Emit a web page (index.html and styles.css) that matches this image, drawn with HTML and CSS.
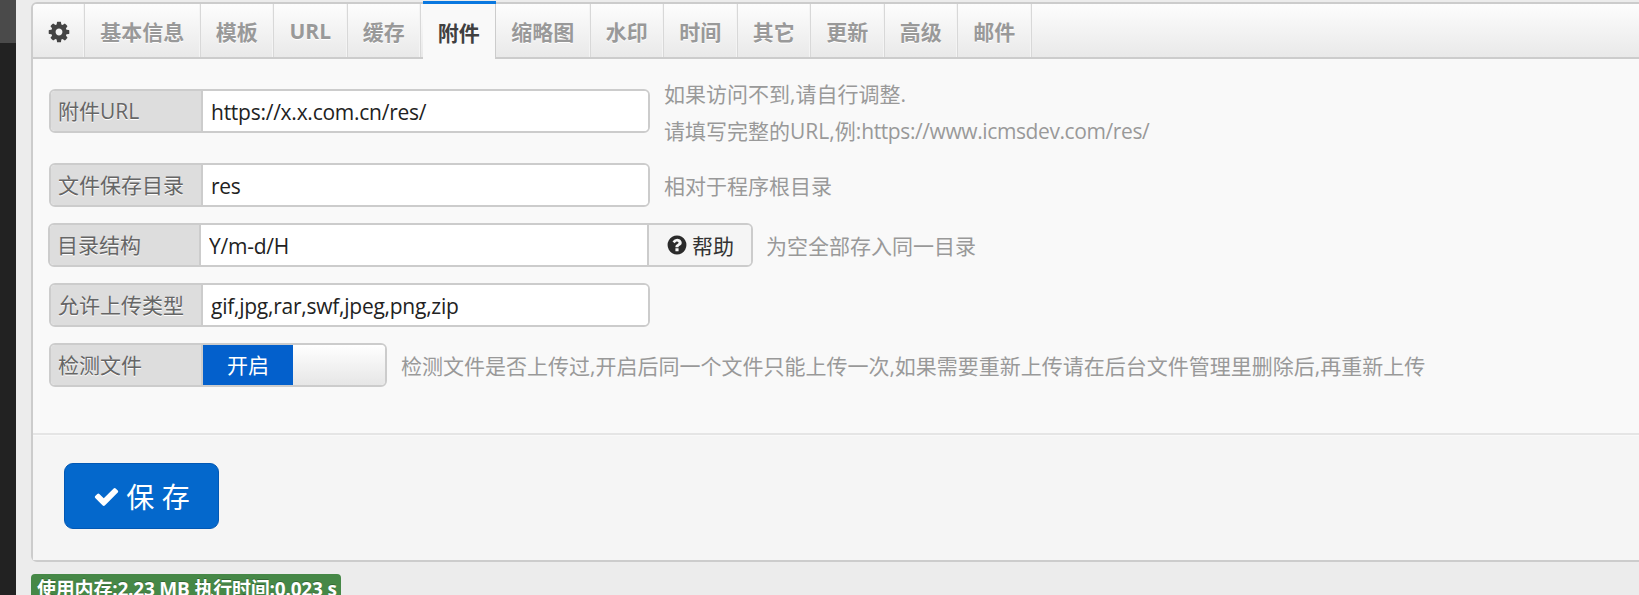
FILE: index.html
```html
<!DOCTYPE html>
<html lang="zh-CN">
<head>
<meta charset="utf-8">
<title>附件设置</title>
<link rel="stylesheet" href="styles.css">
</head>
<body>
<aside class="sidebar"><div class="sidebar-top"></div></aside>
<main class="main">
  <section class="panel">
    <nav class="tabs">
      <a class="tab tab-icon"><svg class="icon-cog" viewBox="0 0 1792 1792"><path d="M1152 896q0-106-75-181t-181-75-181 75-75 181 75 181 181 75 181-75 75-181zm512-109v222q0 12-8 23t-20 13l-185 28q-19 54-39 91 35 50 107 138 10 12 10 25t-9 23q-27 37-99 108t-94 71q-12 0-26-9l-138-108q-44 23-91 38-16 136-29 186-7 28-36 28h-222q-14 0-24.5-8.5t-11.5-21.5l-28-184q-49-16-90-37l-141 107q-10 9-25 9-14 0-25-11-126-114-165-168-7-10-7-23 0-12 8-23 15-21 51-66.5t54-70.5q-27-50-41-99l-183-27q-13-2-21-12.5t-8-23.5v-222q0-12 8-23t19-13l186-28q14-46 39-92-40-57-107-138-10-12-10-24 0-10 9-23 26-36 98.5-107.5t94.5-71.5q13 0 26 10l138 107q44-23 91-38 16-136 29-186 7-28 36-28h222q14 0 24.5 8.5t11.5 21.5l28 184q49 16 90 37l142-107q9-9 24-9 13 0 25 10 129 119 165 170 7 8 7 22 0 12-8 23-15 21-51 66.5t-54 70.5q26 50 41 98l183 28q13 2 21 12.5t8 23.5z"/></svg></a>
      <a class="tab">基本信息</a>
      <a class="tab">模板</a>
      <a class="tab tab-url">URL</a>
      <a class="tab">缓存</a>
      <a class="tab tab-active">附件</a>
      <a class="tab">缩略图</a>
      <a class="tab">水印</a>
      <a class="tab">时间</a>
      <a class="tab">其它</a>
      <a class="tab">更新</a>
      <a class="tab">高级</a>
      <a class="tab">邮件</a>
    </nav>
    <div class="content">
      <div class="row row-tall">
        <div class="group">
          <span class="addon">附件URL</span>
          <input class="field" type="text" value="https://x.x.com.cn/res/">
        </div>
        <div class="help help-stacked">
          <div>如果访问不到,请自行调整.</div>
          <div>请填写完整的URL,例:<span class="latin">https://www.icmsdev.com/res/</span></div>
        </div>
      </div>
      <div class="row">
        <div class="group">
          <span class="addon">文件保存目录</span>
          <input class="field" type="text" value="res">
        </div>
        <div class="help">相对于程序根目录</div>
      </div>
      <div class="row">
        <div class="group group-shift">
          <span class="addon">目录结构</span>
          <input class="field" type="text" value="Y/m-d/H">
          <a class="addon-btn"><svg class="icon-help" viewBox="0 0 1792 1792"><path d="M1024 1376v-192q0-14-9-23t-23-9h-192q-14 0-23 9t-9 23v192q0 14 9 23t23 9h192q14 0 23-9t9-23zm256-672q0-88-55.5-163t-138.5-116-170-41q-243 0-371 213-15 24 8 42l132 100q7 6 19 6 16 0 25-12 53-68 86-92 34-24 86-24 48 0 85.5 26t37.5 59q0 38-20 61t-68 45q-63 28-115.5 86.5t-52.5 125.5v36q0 14 9 23t23 9h192q14 0 23-9t9-23q0-19 21.5-49.5t54.5-49.5q32-18 49-28.5t46-35 44.5-48 28-60.5 12.5-81zm384 192q0 209-103 385.5t-279.5 279.5-385.5 103-385.5-103-279.5-279.5-103-385.5 103-385.5 279.5-279.5 385.5-103 385.5 103 279.5 279.5 103 385.5z"/></svg>帮助</a>
        </div>
        <div class="help">为空全部存入同一目录</div>
      </div>
      <div class="row">
        <div class="group">
          <span class="addon">允许上传类型</span>
          <input class="field" type="text" value="gif,jpg,rar,swf,jpeg,png,zip">
        </div>
      </div>
      <div class="row row-last">
        <div class="group group-switch">
          <span class="addon">检测文件</span>
          <div class="switch"><span class="switch-on">开启</span><span class="switch-off"></span></div>
        </div>
        <div class="help">检测文件是否上传过,开启后同一个文件只能上传一次,如果需要重新上传请在后台文件管理里删除后,再重新上传</div>
      </div>
    </div>
    <div class="actions">
      <button class="save" type="button"><svg class="icon-check" viewBox="0 0 1792 1792"><path d="M1671 566q0 40-28 68l-724 724-136 136q-28 28-68 28t-68-28l-136-136-362-362q-28-28-28-68t28-68l136-136q28-28 68-28t68 28l294 295 656-657q28-28 68-28t68 28l136 136q28 28 28 68z"/></svg>保 存</button>
    </div>
  </section>
  <div class="status"><span class="badge">使用内存:2.23 MB 执行时间:0.023 s</span></div>
</main>
</body>
</html>
```
FILE: styles.css
```css
* { box-sizing: border-box; }
html, body { margin: 0; height: 595px; overflow: hidden; }
body {
  display: flex;
  background: #ececec;
  font-family: "Open Sans", "Noto Sans CJK SC", sans-serif;
  font-size: 21px;
  color: #333;
}
.sidebar { width: 16px; flex: none; background: #222; }
.sidebar-top { height: 43px; background: #4a4a4a; }
.main { flex: none; width: 1700px; padding: 2px 0 0 15px; }
.panel {
  height: 560px;
  border: 2px solid #ccc;
  border-radius: 6px;
  display: flex;
  flex-direction: column;
  background: #f9f9f9;
}
.tabs {
  display: flex;
  height: 55px;
  flex: none;
  border-bottom: 2px solid #ccc;
  background: linear-gradient(#fdfdfd, #e9e9e9);
  border-radius: 4px 0 0 0;
}
.tab {
  display: flex;
  flex: none;
  align-items: center;
  padding: 1px 15.25px 0;
  height: 53px;
  font-weight: 700;
  color: #999;
  text-shadow: 0 1px 0 #fff;
  border-right: 1px solid #d8d8d8;
  box-shadow: inset -1px 0 0 #f4f4f4;
}
.tab-url { width: 73.5px; justify-content: center; padding: 1px 0 0; }
.tab-icon { width: 52px; padding: 3px 0 0; justify-content: center; }
.icon-cog { width: 24px; height: 24px; fill: #444; }
.tab-active {
  position: relative;
  height: 55px;
  margin-left: 1.5px;
  background: #f9f9f9;
  color: #404040;
  border-right-color: #ccc;
  box-shadow: none;
}
.tab-active::before {
  content: "";
  position: absolute;
  left: 0;
  right: -1px;
  top: -3px;
  height: 3px;
  background: #0a78e0;
}
.content { flex: 1; padding: 30px 0 0 16px; background: #f9f9f9; }
.row { display: flex; align-items: center; margin-bottom: 16px; height: 44px; }
.row-tall { align-items: flex-start; height: 58px; }
.group {
  display: flex;
  flex: none;
  width: 601px;
  height: 44px;
  border: 2px solid #ccc;
  border-radius: 6px;
  overflow: hidden;
  background: #fff;
}
.group-shift { width: 705px; margin-left: -1px; }
.group-switch { width: 338px; }
.addon {
  flex: none;
  width: 152px;
  padding-left: 7px;
  line-height: 40px;
  background: #ddd;
  border-right: 2px solid #ccc;
  color: #666;
  text-shadow: 0 1px 0 #fff;
  white-space: nowrap;
}
.group-shift .addon { width: 151px; padding-left: 7px; }
.field {
  flex: 1;
  min-width: 0;
  width: 445px;
  height: 42px;
  padding: 0 8px;
  border: 0;
  outline: 0;
  background: #fff;
  font: inherit;
  letter-spacing: -0.25px;
  color: #222;
}
.group-shift .field { flex: none; width: 446px; }
.addon-btn {
  flex: 1;
  display: flex;
  align-items: center;
  justify-content: center;
  gap: 4px;
  background: #f5f5f5;
  border-left: 2px solid #ccc;
  color: #333;
}
.icon-help { width: 22px; height: 22px; fill: #2b2b2b; }
.help { margin-left: 14px; color: #999; white-space: nowrap; }
.group-shift + .help { margin-left: 13px; }
.row-tall .help { margin-top: -13px; line-height: 37px; }
.latin { letter-spacing: -0.4px; }
.switch { flex: 1; display: flex; }
.switch-on {
  width: 90px;
  height: 40px;
  line-height: 40px;
  text-align: center;
  background: #0360cc;
  color: #fff;
}
.switch-off { flex: 1; background: linear-gradient(#fff, #e6e6e6); }
.actions {
  flex: none;
  height: 127px;
  padding: 28px 0 0 31px;
  background: #f5f5f5;
  border-top: 2px solid #e5e5e5;
  box-shadow: inset 0 1px 0 #f9f9f9;
}
.save {
  display: flex;
  align-items: center;
  justify-content: center;
  gap: 6px;
  width: 155px;
  height: 66px;
  padding: 0;
  border: 1px solid #0258b4;
  border-radius: 9px;
  background: #0468cc;
  color: #fff;
  font-family: inherit;
  font-size: 28px;
  font-weight: 400;
  cursor: pointer;
}
.icon-check { width: 27px; height: 27px; fill: #fff; }
.status { margin-top: 12px; }
.badge {
  display: inline-block;
  width: 310px;
  height: 32px;
  padding-left: 6px;
  border-radius: 4px;
  background: #468847;
  color: #fff;
  font-size: 19px;
  font-weight: 700;
  line-height: 30px;
  white-space: nowrap;
  letter-spacing: -0.2px;
  text-shadow: 0 -1px 0 rgba(0,0,0,.25);
}
```
